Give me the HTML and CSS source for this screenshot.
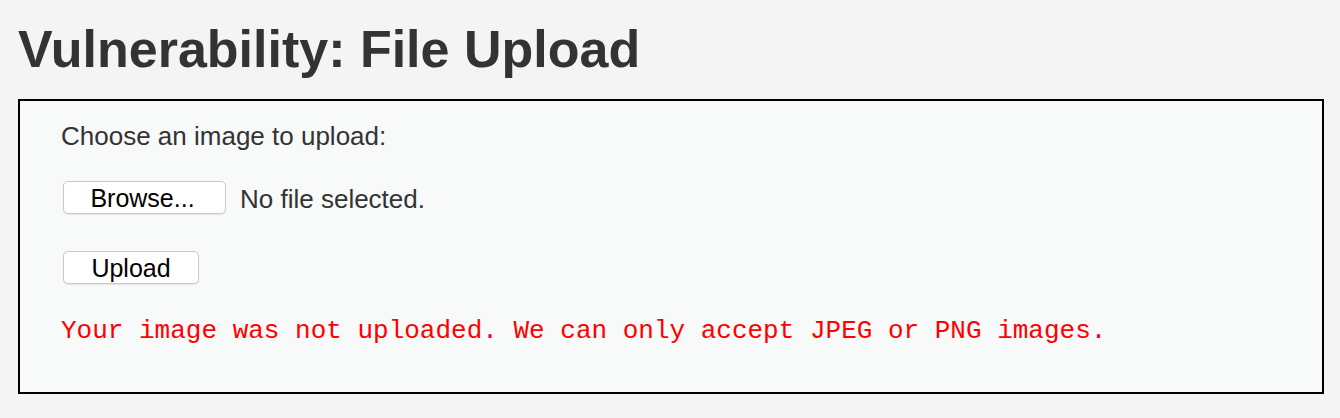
FILE: index.html
```html
<!DOCTYPE html>
<html>
<head>
<meta charset="utf-8">
<link rel="stylesheet" href="styles.css">
</head>
<body>
<div class="page">
  <h1 class="title">Vulnerability: File Upload</h1>
  <div class="vulnerable-code-area">
    <form class="upload-form">
      <div class="label">Choose an image to upload:</div>
      <div class="file-row">
        <button type="button" class="btn btn-browse">Browse...</button>
        <span class="file-status">No file selected.</span>
      </div>
      <div class="upload-row">
        <button type="button" class="btn btn-upload">Upload</button>
      </div>
    </form>
    <pre class="error">Your image was not uploaded. We can only accept JPEG or PNG images.</pre>
  </div>
</div>
</body>
</html>
```
FILE: styles.css
```css
html, body {
  margin: 0;
  padding: 0;
  background: #f4f4f4;
}
.page {
  padding: 0 16px 0 18px;
  font-family: "Liberation Sans", Arial, sans-serif;
  color: #333;
}
.title {
  margin: 0;
  padding-top: 20px;
  font-size: 52px;
  font-weight: bold;
  line-height: 58px;
  color: #333;
  height: 79px;
}
.vulnerable-code-area {
  border: 2px solid #000;
  background: #f8f9f9;
  height: 291px;
  padding: 0 0 0 41px;
}
.upload-form {
  display: flex;
  flex-direction: column;
  font-size: 26px;
  color: #333;
}
.label {
  margin-top: 20px;
  line-height: 30px;
}
.file-row {
  display: flex;
  align-items: center;
  gap: 14px;
  margin-top: 30px;
  margin-left: 2px;
}
.btn {
  font-family: "Liberation Sans", Arial, sans-serif;
  font-size: 25px;
  color: #000;
  background: #fff;
  border: 1px solid #c9c9c9;
  border-radius: 5px;
  box-shadow: 0 1px 1px rgba(0,0,0,0.08);
  height: 33px;
  padding: 2px 0 0 0;
  line-height: 29px;
}
.btn-browse {
  width: 163px;
  padding-right: 4px;
}
.btn-upload {
  width: 136px;
}
.file-status {
  line-height: 30px;
  padding-top: 3px;
}
.upload-row {
  margin-top: 37px;
  margin-left: 2px;
  display: flex;
}
.error {
  margin: 32px 0 0 0;
  font-family: "Courier New", "Nimbus Mono PS", "Nimbus Mono L", FreeMono, "Liberation Mono", monospace;
  font-size: 26px;
  line-height: 30px;
  color: #ff0000;
}
```
